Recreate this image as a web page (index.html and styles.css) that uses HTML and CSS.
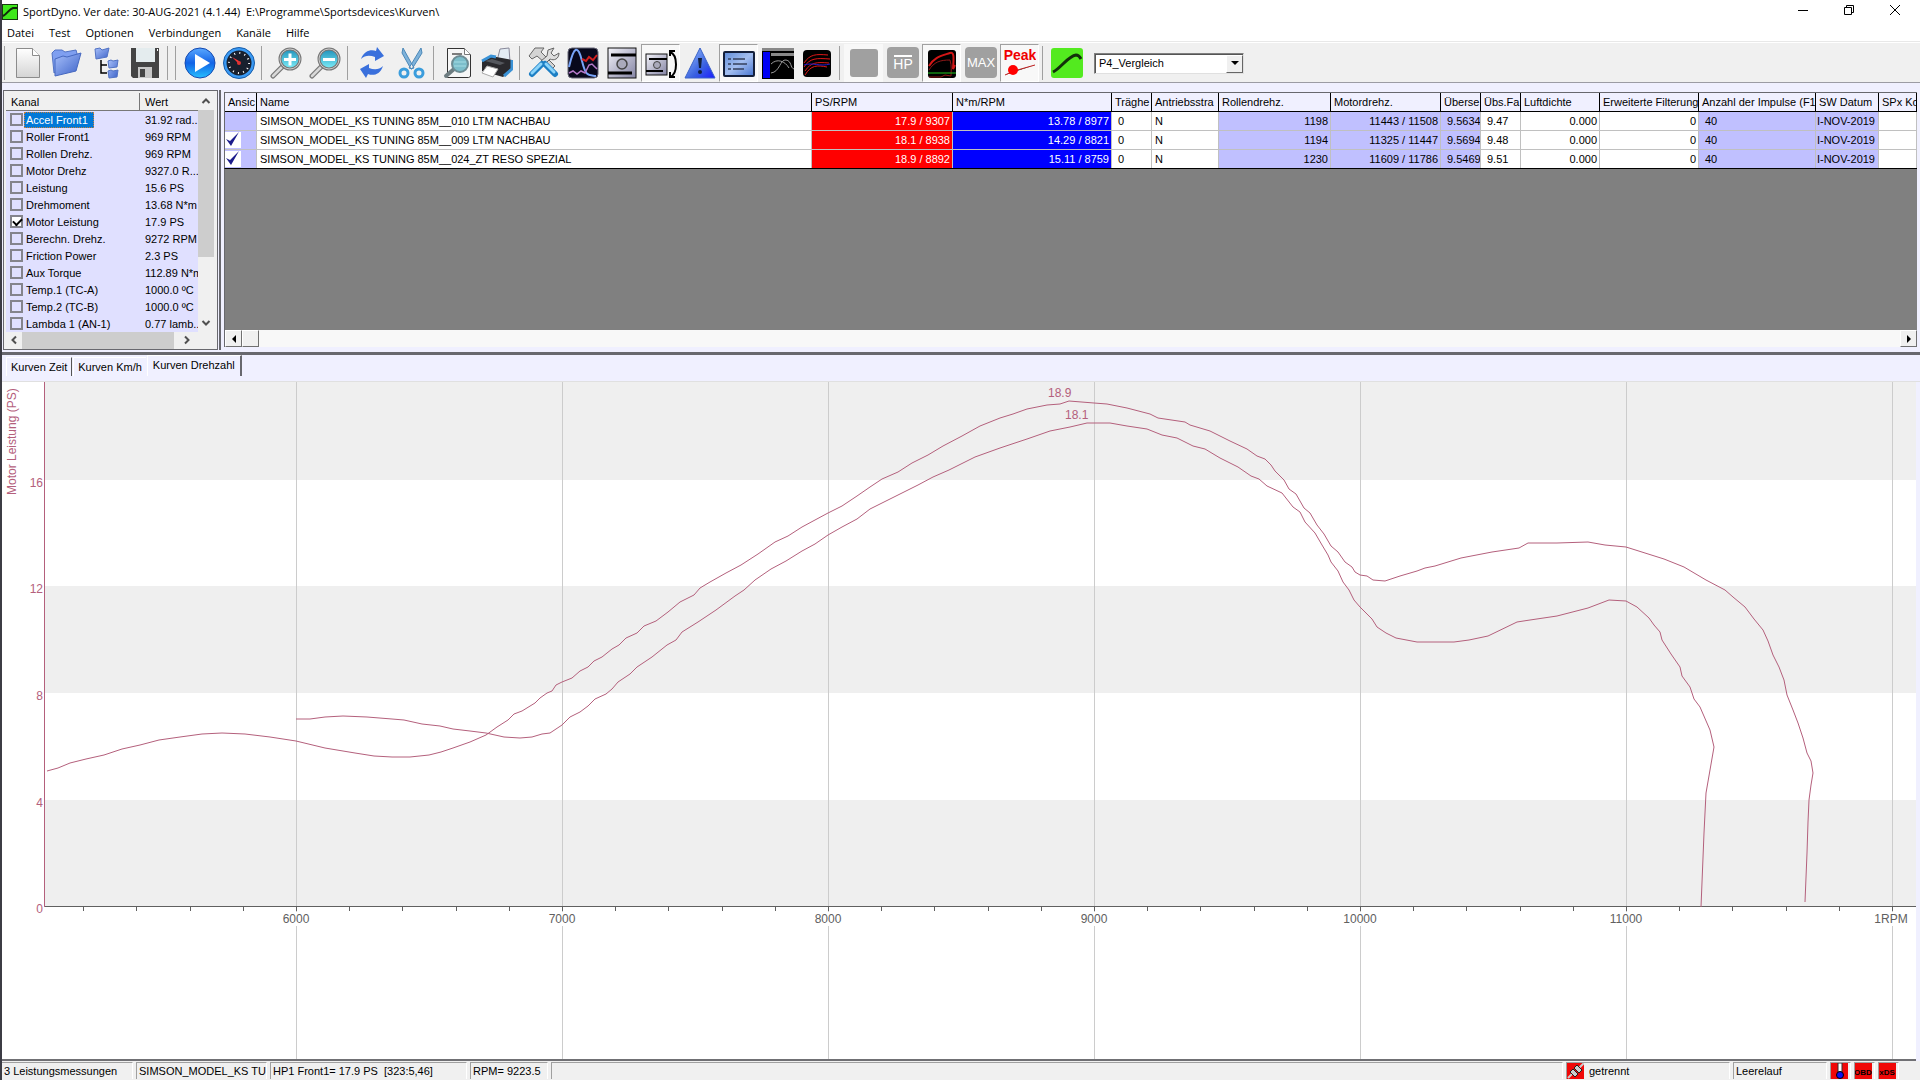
FILE: index.html
```html
<!DOCTYPE html>
<html lang="de">
<head>
  <meta charset="UTF-8">
  <meta name="viewport" content="width=device-width, initial-scale=1.0">
  <title>SportDyno</title>
  <link rel="stylesheet" href="styles.css">
</head>
<body>
  <header class="titlebar">
    <svg class="app-icon" viewBox="0 0 16 16"><rect x=".5" y=".5" width="15" height="15" fill="#3fe81c" stroke="#173b10"/><path d="M1 12C5 10 7 5 11 4h4" fill="none" stroke="#102a0a" stroke-width="2"/></svg>
    <h1>SportDyno. Ver date: 30-AUG-2021 (4.1.44)&nbsp; E:\Programme\Sportsdevices\Kurven\</h1>
    <div class="window-buttons">
      <button aria-label="Minimieren"><svg viewBox="0 0 12 12"><path d="M1 6.500h10" stroke="#000"/></svg></button>
      <button aria-label="Wiederherstellen"><svg viewBox="0 0 12 12"><path d="M1.500 3.500h7v7h-7zM3.500 3.500v-2h7v7h-2" fill="none" stroke="#000"/></svg></button>
      <button aria-label="Schließen"><svg viewBox="0 0 12 12"><path d="M1 1l10 10M11 1L1 11" stroke="#000"/></svg></button>
    </div>
  </header>

  <nav class="menu">
    <button>Datei</button>
    <button>Test</button>
    <button>Optionen</button>
    <button>Verbindungen</button>
    <button>Kanäle</button>
    <button>Hilfe</button>
  </nav>

  <!-- Farbverläufe für die Symbole -->
  <svg class="defs" aria-hidden="true">
    <defs>
      <linearGradient id="paper" x1="0" y1="0" x2="0" y2="1"><stop offset="0" stop-color="#fff"/><stop offset="1" stop-color="#d4d4d4"/></linearGradient>
      <linearGradient id="folder" x1="0" y1="0" x2="1" y2="1"><stop offset="0" stop-color="#a8c0fa"/><stop offset="1" stop-color="#3c62c8"/></linearGradient>
      <linearGradient id="blue" x1="0" y1="0" x2="0" y2="1"><stop offset="0" stop-color="#5aa8ff"/><stop offset=".5" stop-color="#1263e6"/><stop offset="1" stop-color="#25c0ff"/></linearGradient>
      <linearGradient id="metal" x1="0" y1="0" x2="1" y2="1"><stop offset="0" stop-color="#f4f4fa"/><stop offset="1" stop-color="#8484a4"/></linearGradient>
      <linearGradient id="screen" x1="0" y1="0" x2="1" y2="1"><stop offset="0" stop-color="#5f8cd8"/><stop offset=".5" stop-color="#a4bff0"/><stop offset="1" stop-color="#4674d0"/></linearGradient>
      <linearGradient id="lens" x1="0" y1="0" x2="0" y2="1"><stop offset="0" stop-color="#1f8fb8"/><stop offset="1" stop-color="#7ff0fa"/></linearGradient>
      <linearGradient id="warn" x1="0" y1="0" x2="1" y2="1"><stop offset="0" stop-color="#9ec6ff"/><stop offset=".6" stop-color="#3a62e0"/><stop offset="1" stop-color="#1b1bff"/></linearGradient>
    </defs>
  </svg>

  <div class="toolbar" role="toolbar">
    <span class="sep first"></span>
    <button aria-label="Neu"><svg viewBox="0 0 32 32"><path d="M4.500 1.500h16l7 7v22h-23z" fill="url(#paper)" stroke="#8c8c8c"/><path d="M20.500 1.500v7h7" fill="#fff" stroke="#8c8c8c"/></svg></button>
    <button aria-label="Öffnen"><svg viewBox="0 0 32 32"><path d="M3 26L1 6l3-3h7l3 2 11-2 2 7z" fill="#7f9ff0" stroke="#5273c4"/><path d="M4 12l8-3 4 1 14-4-5 18-21 5z" fill="url(#folder)" stroke="#4668c0"/></svg></button>
    <button aria-label="Baum"><svg viewBox="0 0 32 32"><path d="M11 13v13h6M11 18h6" fill="none" stroke="#000" stroke-width="1.500"/><path d="M5 2l5-1 2 2 7-2-2 9-11 2z" fill="url(#folder)" stroke="#5273c4"/><path d="M18 14l3-1 2 1 5-1-1 7-8 1zM18 24l3-1 2 1 5-1-1 7-8 1z" fill="url(#folder)" stroke="#5273c4"/></svg></button>
    <button aria-label="Speichern"><svg viewBox="0 0 32 32"><path d="M2 1h28v30H4l-2-2z" fill="#444"/><path d="M7 1h19v14H7z" fill="#e4ecee"/><path d="M28 2h1v2h-1z" fill="#fff"/><path d="M9 20h14v11H9z" fill="#c8c8c8"/><path d="M11 22h5v8h-5z" fill="#444"/></svg></button>
    <span class="sep"></span>
    <span class="sep"></span>
    <button aria-label="Start"><svg viewBox="0 0 32 32"><circle cx="16" cy="16" r="15" fill="url(#blue)" stroke="#1448b0"/><path d="M11 7l15 9-15 9z" fill="#fff"/></svg></button>
    <button aria-label="Messuhr"><svg viewBox="0 0 32 32"><circle cx="16" cy="16" r="14" fill="#18202e" stroke="#3a9af4" stroke-width="3"/><circle cx="16" cy="16" r="15.500" fill="none" stroke="#185ca8"/><circle cx="16" cy="16" r="10" fill="none" stroke="#fff" stroke-width="2" stroke-dasharray="1 4.240"/><path d="M9 10l7 4v3z" fill="#f33"/><circle cx="16" cy="16" r="2" fill="#d33"/></svg></button>
    <span class="sep"></span>
    <button aria-label="Vergrößern"><svg viewBox="0 0 32 32"><path d="M13 19L3 29" stroke="#777" stroke-width="5" stroke-linecap="round"/><path d="M13 19L3 29" stroke="#d8d8d8" stroke-width="2.500" stroke-linecap="round"/><circle cx="20" cy="12" r="10" fill="url(#lens)" stroke="#777" stroke-width="3"/><circle cx="20" cy="12" r="10" fill="none" stroke="#ccc"/><path d="M14 12.500h12M20 6.500v12" stroke="#fff" stroke-width="3"/></svg></button>
    <button aria-label="Verkleinern"><svg viewBox="0 0 32 32"><path d="M13 19L3 29" stroke="#777" stroke-width="5" stroke-linecap="round"/><path d="M13 19L3 29" stroke="#d8d8d8" stroke-width="2.500" stroke-linecap="round"/><circle cx="20" cy="12" r="10" fill="url(#lens)" stroke="#777" stroke-width="3"/><circle cx="20" cy="12" r="10" fill="none" stroke="#ccc"/><path d="M14 12.500h12" stroke="#fff" stroke-width="3"/></svg></button>
    <span class="sep"></span>
    <button aria-label="Aktualisieren"><svg viewBox="0 0 32 32"><path d="M5 12C8 3 16 2 20 4l1-4 7 9-9 5 0-4c-5-2-10-2-14 2zM27 19c-3 9-10 10-15 8l-2 4-6-9 9-5v4c5 2 10 2 14-2z" fill="#3a70dc"/></svg></button>
    <button aria-label="Ausschneiden"><svg viewBox="0 0 32 32"><path d="M8 1l11 20-3 1L7 6zM26 1L14 21l3 1L27 6z" fill="#7eb2da" stroke="#4c88b8"/><circle cx="9" cy="26" r="4" fill="none" stroke="#3b9ddc" stroke-width="3"/><circle cx="24" cy="26" r="4" fill="none" stroke="#3b9ddc" stroke-width="3"/></svg></button>
    <span class="sep"></span>
    <button aria-label="Seitenansicht"><svg viewBox="0 0 32 32"><path d="M5.500 1.500h17l6 6v22l-2 1h-21z" fill="#f6f6f6" stroke="#333"/><path d="M22.500 1.500v6h6" fill="#fff" stroke="#777"/><path d="M10 7h10" stroke="#555" stroke-width="1.500"/><path d="M12 22l-8 7" stroke="#6d7c80" stroke-width="4" stroke-linecap="round"/><circle cx="18" cy="17" r="8" fill="#7cbecb" stroke="#6d8c94" stroke-width="2"/><path d="M12 15h12M12 19h12" stroke="#a4dce4"/></svg></button>
    <button aria-label="Drucken"><svg viewBox="0 0 32 32"><path d="M16 14l3-12 9-1 1 14z" fill="#e4ecf4" stroke="#889"/><path d="M1 14l9-5 21 4v10l-9 7L1 24z" fill="#2a2a2e"/><path d="M1 14l9-5 5 1M31 13v9l-8 7" fill="none" stroke="#3a92d6" stroke-width="3"/><path d="M4 14l7-2 13 4-5 2z" fill="#55585e"/><path d="M6 19l11 3-5 8-11-4z" fill="#fff" stroke="#aaa"/></svg></button>
    <span class="sep"></span>
    <button aria-label="Werkzeuge"><svg viewBox="0 0 32 32"><path d="M1 9l6-8h9l-3 4 14 14-3 3L9 9l-5 3z" fill="#d4d4d4" stroke="#666"/><path d="M20 3l6-2-3 5 3 3 5-3c0 6-5 8-9 6l-5 5-4-3 6-5z" fill="#ddd" stroke="#666"/><path d="M4 27l10-10M17 17l10 10" stroke="#1d7fc4" stroke-width="6" stroke-linecap="round"/><path d="M4 26l9-9M18 17l8 8" stroke="#8cd4fa" stroke-width="3" stroke-linecap="round"/></svg></button>
    <button aria-label="Diagramm"><svg viewBox="0 0 32 32"><rect x="1" y="1" width="30" height="30" rx="4" fill="#08081c" stroke="#667"/><path d="M2 20c5-22 9-22 13-6s6 14 14 15" fill="none" stroke="#78a4f8" stroke-width="2"/><path d="M15 12l4 2 3-4 4 3 4-5" fill="none" stroke="#d02020" stroke-width="2"/><path d="M2 26l4-2 4 3 4-3 4 2 4-8 3-1 5 5" fill="none" stroke="#b478c8" stroke-width="1.500"/></svg></button>
    <button aria-label="Rolle"><svg viewBox="0 0 32 32"><rect x="2" y="1" width="28" height="30" fill="url(#metal)" stroke="#111"/><path d="M5 8h25M2 26h24" stroke="#000" stroke-width="3"/><circle cx="16" cy="17" r="5" fill="#aab" stroke="#444" stroke-width="1.500"/></svg></button>
    <button class="pressed" aria-label="Rolle bremsen"><svg viewBox="0 0 32 32"><rect x="1" y="7" width="21" height="21" fill="url(#metal)" stroke="#111"/><path d="M4 12h18M1 24h17" stroke="#000" stroke-width="2"/><circle cx="12" cy="18" r="3.500" fill="#aab" stroke="#444"/><path d="M25 5c8 3 8 22 0 25M25 9V4h5M25 25v5h5" fill="none" stroke="#000" stroke-width="2"/></svg></button>
    <button aria-label="Warnung"><svg viewBox="0 0 32 32"><path d="M16 1l15 30H1z" fill="url(#warn)" stroke="#3a62c8"/><path d="M14 11h4l-1 10h-2z" fill="#102040"/><circle cx="16" cy="25" r="2" fill="#102040"/></svg></button>
    <button class="pressed" aria-label="Anzeige"><svg viewBox="0 0 32 32"><rect x="1" y="5" width="30" height="24" rx="1" fill="url(#screen)" stroke="#14203c" stroke-width="2"/><path d="M5 12h3M10 12h12M5 17h3M10 17h14M5 22h3M10 22h11" stroke="#34405c" stroke-width="1.500"/></svg></button>
    <button aria-label="Ansicht"><svg viewBox="0 0 32 32"><path d="M0 1h32v31H0z" fill="#000"/><path d="M0 1h32v3H0zM9 6h23v3H9z" fill="#888"/><path d="M1 5h7v26H1z" fill="#0000f4"/><path d="M9 26c9-1 9-14 15-13s4 8 8 9M9 17c6-6 14-3 18 4" fill="none" stroke="#999"/></svg></button>
    <button aria-label="Kurven"><svg viewBox="0 0 32 32"><rect x="2" y="3" width="28" height="27" rx="4" fill="#000"/><path d="M3 16c6-9 12-9 24-8M3 20c6-9 12-9 26-8M4 24c6-9 12-9 24-8M4 28c6-10 12-10 22-8" fill="none" stroke="#e01818"/><path d="M3 18c9-3 16 2 26-1" fill="none" stroke="#2020d0"/></svg></button>
    <span class="sep"></span>
    <button class="dither" aria-label="Leer"><svg viewBox="0 0 32 32"><rect x="2" y="2" width="28" height="28" rx="3" fill="#a0a0a0"/></svg></button>
    <button aria-label="HP"><svg viewBox="0 0 32 32"><rect width="32" height="31" rx="4" fill="#a0a0a0"/><path d="M7 9h18" stroke="#fff" stroke-width="2"/><text x="16" y="22" class="icon-text">HP</text></svg></button>
    <button class="pressed" aria-label="Vergleich"><svg viewBox="0 0 32 32"><rect x="2" y="3" width="28" height="28" rx="3" fill="#000"/><path d="M3 19C8 10 15 9 24 6c4-1 4 3 3 16l2-4" fill="none" stroke="#d41616" stroke-width="2"/><path d="M3 23c5-8 11-10 21-10 2 6 1 12 1 16l-6-1-4 2-12 0" fill="none" stroke="#901818"/><path d="M2 26h28" stroke="#20c820"/></svg></button>
    <button aria-label="MAX"><svg viewBox="0 0 32 32"><rect width="32" height="31" rx="4" fill="#a0a0a0"/><text x="16" y="20" class="icon-text max">MAX</text></svg></button>
    <button class="pressed" aria-label="Peak"><svg viewBox="0 0 32 32"><text x="16" y="13" class="icon-text peak">Peak</text><path d="M1 28l9-4 21-6" stroke="#c02020"/><circle cx="9" cy="23" r="5" fill="#f00"/></svg></button>
    <span class="sep"></span>
    <button aria-label="SportDyno"><svg viewBox="0 0 32 32"><rect x="0" y="1" width="32" height="30" rx="3" fill="#53ea1f"/><path d="M2 25C10 21 17 9 25 8q3 0 5 4" fill="none" stroke="#12300a" stroke-width="3"/></svg></button>
    <label class="combo">
      <select aria-label="Vorlage"><option>P4_Vergleich</option></select>
      <span class="combo-arrow"><svg viewBox="0 0 8 5"><path d="M0 0h8L4 4z"/></svg></span>
    </label>
  </div>

  <section class="upper">
    <div class="channels">
      <div class="channel-view">
        <table class="channel-table">
          <thead><tr><th>Kanal</th><th>Wert</th></tr></thead>
          <tbody>
            <tr><td><label class="selected"><input type="checkbox"><span>Accel Front1</span></label></td><td>31.92 rad..</td></tr>
            <tr><td><label><input type="checkbox"><span>Roller Front1</span></label></td><td>969 RPM</td></tr>
            <tr><td><label><input type="checkbox"><span>Rollen Drehz.</span></label></td><td>969 RPM</td></tr>
            <tr><td><label><input type="checkbox"><span>Motor Drehz</span></label></td><td>9327.0 R...</td></tr>
            <tr><td><label><input type="checkbox"><span>Leistung</span></label></td><td>15.6 PS</td></tr>
            <tr><td><label><input type="checkbox"><span>Drehmoment</span></label></td><td>13.68 N*m</td></tr>
            <tr><td><label><input type="checkbox" checked><span>Motor Leistung</span></label></td><td>17.9 PS</td></tr>
            <tr><td><label><input type="checkbox"><span>Berechn. Drehz.</span></label></td><td>9272 RPM</td></tr>
            <tr><td><label><input type="checkbox"><span>Friction Power</span></label></td><td>2.3 PS</td></tr>
            <tr><td><label><input type="checkbox"><span>Aux Torque</span></label></td><td>112.89 N*m</td></tr>
            <tr><td><label><input type="checkbox"><span>Temp.1 (TC-A)</span></label></td><td>1000.0 ºC</td></tr>
            <tr><td><label><input type="checkbox"><span>Temp.2 (TC-B)</span></label></td><td>1000.0 ºC</td></tr>
            <tr><td><label><input type="checkbox"><span>Lambda 1 (AN-1)</span></label></td><td>0.77 lamb..</td></tr>
          </tbody>
        </table>
      </div>
      <div class="vscroll">
        <button aria-label="Nach oben"><svg viewBox="0 0 10 10"><path d="M1.500 7L5 3.500 8.500 7"/></svg></button>
        <span class="thumb"></span>
        <button aria-label="Nach unten"><svg viewBox="0 0 10 10"><path d="M1.500 3L5 6.500 8.500 3"/></svg></button>
      </div>
      <div class="hscroll">
        <button aria-label="Nach links"><svg viewBox="0 0 10 10"><path d="M7 1.500L3.500 5 7 8.500"/></svg></button>
        <span class="thumb"></span>
        <button aria-label="Nach rechts"><svg viewBox="0 0 10 10"><path d="M3 1.500L6.500 5 3 8.500"/></svg></button>
      </div>
    </div>

    <div class="runs">
      <table class="run-table">
        <colgroup>
          <col class="w32"><col><col class="w141"><col class="w159"><col class="w40"><col class="w67"><col class="w112"><col class="w110"><col class="w40"><col class="w40"><col class="w79"><col class="w99"><col class="w117"><col class="w63"><col class="w38">
        </colgroup>
        <thead>
          <tr><th>Ansic</th><th>Name</th><th>PS/RPM</th><th>N*m/RPM</th><th>Träghe</th><th>Antriebsstra</th><th>Rollendrehz.</th><th>Motordrehz.</th><th>Überse</th><th>Übs.Fa</th><th>Luftdichte</th><th>Erweiterte Filterung</th><th>Anzahl der Impulse (F1</th><th>SW Datum</th><th>SPx Ko</th></tr>
        </thead>
        <tbody>
          <tr><td class="lilac view"></td><td>SIMSON_MODEL_KS TUNING 85M__010 LTM NACHBAU</td><td class="red num">17.9 / 9307</td><td class="blue num">13.78 / 8977</td><td class="pad">0</td><td>N</td><td class="lilac num">1198</td><td class="lilac num">11443 / 11508</td><td class="lilac pad">9.5634</td><td class="pad">9.47</td><td class="num">0.000</td><td class="num">0</td><td class="lilac pad">40</td><td class="lilac date"><span>I-NOV-2019</span></td><td></td></tr>
          <tr><td class="lilac view"><svg viewBox="0 0 16 16"><path d="M0 0h16v16H0z" fill="#fff"/><path d="M1 7l4 2L14 0 6 14z" fill="#1c1c8c"/></svg></td><td>SIMSON_MODEL_KS TUNING 85M__009 LTM NACHBAU</td><td class="red num">18.1 / 8938</td><td class="blue num">14.29 / 8821</td><td class="pad">0</td><td>N</td><td class="lilac num">1194</td><td class="lilac num">11325 / 11447</td><td class="lilac pad">9.5694</td><td class="pad">9.48</td><td class="num">0.000</td><td class="num">0</td><td class="lilac pad">40</td><td class="lilac date"><span>I-NOV-2019</span></td><td></td></tr>
          <tr><td class="lilac view"><svg viewBox="0 0 16 16"><path d="M0 0h16v16H0z" fill="#fff"/><path d="M1 7l4 2L14 0 6 14z" fill="#1c1c8c"/></svg></td><td>SIMSON_MODEL_KS TUNING 85M__024_ZT RESO SPEZIAL</td><td class="red num">18.9 / 8892</td><td class="blue num">15.11 / 8759</td><td class="pad">0</td><td>N</td><td class="lilac num">1230</td><td class="lilac num">11609 / 11786</td><td class="lilac pad">9.5469</td><td class="pad">9.51</td><td class="num">0.000</td><td class="num">0</td><td class="lilac pad">40</td><td class="lilac date"><span>I-NOV-2019</span></td><td></td></tr>
        </tbody>
      </table>
      <div class="classic-scroll">
        <button aria-label="Nach links"><svg viewBox="0 0 8 8"><path d="M6 0v8L2 4z"/></svg></button>
        <button aria-label="Schieber"></button>
        <span class="track"></span>
        <button aria-label="Nach rechts"><svg viewBox="0 0 8 8"><path d="M2 0v8l4-4z"/></svg></button>
      </div>
    </div>
  </section>

  <div class="tabs" role="tablist">
    <button role="tab">Kurven Zeit</button>
    <button role="tab">Kurven Km/h</button>
    <button role="tab" class="active" aria-selected="true">Kurven Drehzahl</button>
  </div>

  <main class="chart">
    <svg viewBox="2 382 1914 677" preserveAspectRatio="xMinYMin meet">
      <g fill="#efefef" shape-rendering="crispEdges">
        <rect x="45" y="382" width="1871" height="98"/>
        <rect x="45" y="586" width="1871" height="107"/>
        <rect x="45" y="800" width="1871" height="107"/>
      </g>
      <path class="grid" d="M296.500 382V1059M562.500 382V1059M828.500 382V1059M1094.500 382V1059M1360.500 382V1059M1626.500 382V1059M1892.500 382V1059"/>
      <g fill="#fff">
        <rect x="278" y="912" width="36" height="14"/><rect x="544" y="912" width="36" height="14"/><rect x="810" y="912" width="36" height="14"/><rect x="1076" y="912" width="36" height="14"/><rect x="1340" y="912" width="40" height="14"/><rect x="1606" y="912" width="40" height="14"/><rect x="1872" y="912" width="38" height="14"/>
      </g>
      <path class="axis" d="M44 906.500H1916M83.500 907v4M136.500 907v4M190.500 907v4M243.500 907v4M296.500 907v4M349.500 907v4M402.500 907v4M456.500 907v4M509.500 907v4M562.500 907v4M615.500 907v4M668.500 907v4M722.500 907v4M775.500 907v4M828.500 907v4M881.500 907v4M934.500 907v4M988.500 907v4M1041.500 907v4M1094.500 907v4M1147.500 907v4M1200.500 907v4M1254.500 907v4M1307.500 907v4M1360.500 907v4M1413.500 907v4M1466.500 907v4M1520.500 907v4M1573.500 907v4M1626.500 907v4M1679.500 907v4M1732.500 907v4M1786.500 907v4M1839.500 907v4M1892.500 907v4"/>
      <path class="curve" d="M44.500 382V907"/>

      <polyline class="curve" points="47,771 58,768 70,763 86,759 104,755 122,749 140,745 159,740 180,737 202,734 222,733 245,734 270,737 296,741 325,748 355,753 374,756 392,757 410,757 429,755 441,752 453,748 470,742 486,735 497,727 508,720 514,714 522,711 535,703 540,698 547,693 552,691 556,685 562,682 572,678 580,671 588,667 594,661 602,657 612,649 619,645 626,638 637,633 644,626 656,621 668,612 680,602 694,595 700,588 710,582 726,573 741,565 758,554 775,542 788,536 802,527 815,520 828,513 842,506 857,496 870,487 882,479 898,472 912,463 928,455 943,446 962,436 980,426 1000,418 1013,414 1027,409 1047,405 1060,404 1069,401 1094,403 1107,404 1127,408 1150,414 1158,418 1185,422 1190,425 1210,431 1230,441 1247,449 1257,456 1265,459 1271,465 1275,471 1284,480 1289,489 1296,494 1304,508 1310,513 1317,525 1324,534 1331,546 1338,552 1345,562 1352,567 1355,572 1360,575 1367,576 1373,580 1385,581 1400,576 1417,571 1425,568 1435,566 1461,558 1492,552 1519,548 1528,543 1557,543 1588,542 1605,545 1626,547 1645,553 1664,559 1684,567 1706,580 1725,590 1733,597 1745,607 1754,619 1763,630 1768,641 1773,655 1779,667 1784,680 1787,695 1793,710 1798,723 1803,738 1807,753 1811,761 1813,773 1811,785 1809,800 1808,822 1807,853 1805,902"/>
      <polyline class="curve" points="296,719 310,719 325,717 343,716 367,717 392,719 404,720 422,724 440,726 453,729 470,731 486,733 504,737 520,738 532,737 542,734 550,733 562,725 570,717 580,712 588,706 595,699 606,694 612,689 618,682 630,674 637,667 652,657 667,645 676,640 682,632 698,622 716,610 735,596 744,590 755,580 771,569 786,561 802,551 815,544 828,535 842,527 857,519 870,509 882,503 900,494 918,485 933,477 949,470 975,457 1000,448 1027,439 1050,431 1070,427 1087,423 1110,423 1127,426 1147,429 1162,435 1177,438 1193,446 1205,449 1220,458 1238,467 1251,476 1259,479 1267,486 1282,493 1293,507 1300,512 1305,522 1315,533 1322,545 1328,555 1331,562 1338,571 1343,582 1349,590 1354,600 1360,607 1372,619 1377,627 1386,633 1396,638 1417,642 1454,642 1469,640 1488,636 1517,622 1530,620 1557,616 1588,608 1609,600 1626,601 1637,607 1649,618 1654,625 1660,632 1662,640 1671,654 1680,667 1682,676 1690,687 1694,699 1700,707 1710,730 1714,747 1710,770 1706,793 1704,833 1701,907"/>

      <g class="curve-text">
        <text x="1048" y="397">18.9</text>
        <text x="1065" y="419">18.1</text>
        <text transform="translate(16 495) rotate(-90)">Motor Leistung (PS)</text>
        <g text-anchor="end">
          <text x="43" y="487">16</text>
          <text x="43" y="593">12</text>
          <text x="43" y="700">8</text>
          <text x="43" y="807">4</text>
          <text x="43" y="913">0</text>
        </g>
      </g>
      <g class="axis-text">
        <text x="296" y="923">6000</text>
        <text x="562" y="923">7000</text>
        <text x="828" y="923">8000</text>
        <text x="1094" y="923">9000</text>
        <text x="1360" y="923">10000</text>
        <text x="1626" y="923">11000</text>
        <text x="1891" y="923">1RPM</text>
      </g>
    </svg>
  </main>

  <footer class="status">
    <span class="cell w131">3 Leistungsmessungen</span>
    <span class="cell w131 bordered">SIMSON_MODEL_KS TUNI</span>
    <span class="cell w197 bordered">HP1 Front1= 17.9 PS&nbsp; [323:5,46]</span>
    <span class="cell w78 bordered">RPM= 9223.5</span>
    <span class="cell fill bordered"></span>
    <span class="cell w164 bordered icon-cell"><svg viewBox="0 0 17 16"><path d="M0 0h17v16H0z" fill="#f00808"/><path d="M1 15l4-4M12 5l5-5" stroke="#ccc" stroke-width="2"/><path d="M3 9l5 5 3-3-5-5zM7 5l5 5 3-3-5-5z" fill="#ccc" stroke="#222"/></svg>getrennt</span>
    <span class="cell w94 bordered">Leerelauf</span>
    <span class="cell w21 bordered icon-cell"><svg viewBox="0 0 17 16"><path d="M0 0h17v16H0z" fill="#f00808"/><path d="M7 0h4v9H7z" fill="#fff" stroke="#333"/><circle cx="9" cy="12" r="3.500" fill="#1010f0" stroke="#000"/></svg></span>
    <span class="cell w21 bordered icon-cell"><svg viewBox="0 0 17 16"><path d="M0 0h17v16H0z" fill="#f00808"/><text x="8" y="12" class="chip">OBD</text></svg></span>
    <span class="cell w21 bordered icon-cell"><svg viewBox="0 0 17 16"><path d="M0 0h17v16H0z" fill="#f00808"/><text x="8" y="12" class="chip">xDS</text></svg></span>
  </footer>
</body>
</html>
```

FILE: styles.css
```css
* {
  box-sizing: border-box;
}

body {
  margin: 0;
  height: 100vh;
  display: flex;
  flex-direction: column;
  overflow: hidden;
  background: #f0f0ff;
  border-left: 2px solid #3c3c44;
  font-family: "Liberation Sans", Arial, sans-serif;
  font-size: 11px;
  color: #000;
}

button,
select {
  font: inherit;
  color: inherit;
  border: 0;
  padding: 0;
  background: none;
}

.defs {
  position: absolute;
  width: 0;
  height: 0;
}

/* Titelzeile und Menü */
.titlebar,
.menu {
  flex: none;
  display: flex;
  align-items: center;
  background: #fff;
  font-family: "Open Sans", "Noto Sans", sans-serif;
}

.titlebar {
  height: 23px;
}

.app-icon {
  width: 16px;
  height: 16px;
}

.titlebar h1 {
  flex: 1;
  margin: 0 0 0 5px;
  font-size: 11px;
  font-weight: normal;
}

.window-buttons {
  display: flex;
  margin-right: 2px;
}

.window-buttons button {
  width: 46px;
  height: 20px;
}

.window-buttons svg {
  width: 12px;
  height: 12px;
}

.menu {
  height: 18px;
  padding-left: 5px;
  gap: 15px;
}

/* Werkzeugleiste */
.toolbar {
  flex: none;
  display: flex;
  align-items: center;
  height: 42px;
  padding-top: 2px;
  background: #f0f0f0;
  border-top: 1px solid #e8e8e8;
  border-bottom: 1px solid #9c9ca4;
  box-shadow: inset 0 1px #fff;
}

.toolbar button {
  flex: none;
  width: 39px;
  height: 38px;
  border: 1px solid transparent;
  display: flex;
  align-items: center;
  justify-content: center;
}

.toolbar button svg {
  width: 32px;
  height: 32px;
}

.toolbar .pressed {
  border-color: #a0a0a0 #fff #fff #a0a0a0;
  background: #f8f8f8;
}

.toolbar .dither {
  background: #f8f8f8;
}

.sep {
  flex: none;
  width: 8px;
  height: 34px;
  background: linear-gradient(#a0a0a0, #a0a0a0) 3px 0 / 1px 100% no-repeat;
}

.sep.first {
  width: 6px;
  background-position: 2px 0;
}

.icon-text {
  font: 14px "Liberation Sans", sans-serif;
  fill: #fff;
  text-anchor: middle;
}

.icon-text.max {
  font-size: 13px;
}

.icon-text.peak {
  font-weight: bold;
  fill: #f00000;
}

.combo {
  display: flex;
  width: 150px;
  height: 21px;
  margin-left: 8px;
  background: #fff;
  border: 1px solid;
  border-color: #808080 #e0e0e0 #e0e0e0 #808080;
  box-shadow: inset 1px 1px #555;
}

.combo select {
  flex: 1;
  min-width: 0;
  appearance: none;
  padding-left: 4px;
}

.combo-arrow {
  display: flex;
  align-items: center;
  justify-content: center;
  width: 17px;
  margin: 1px 0 0;
  background: #f0f0f0;
  border: 1px solid;
  border-color: #fff #666 #666 #fff;
  pointer-events: none;
}

.combo-arrow svg {
  width: 8px;
  height: 5px;
}

/* Oberer Bereich */
.upper {
  flex: none;
  display: flex;
  height: 272px;
  padding: 7px 3px 2px 1px;
  border-bottom: 3px solid #68686e;
}

.channels {
  flex: none;
  display: grid;
  grid-template-columns: 192px 16px;
  grid-template-rows: 1fr 17px;
  width: 215px;
  padding: 2px;
  border: 1px solid #68686e;
  background: #f0f0f0;
}

.channel-view {
  overflow: hidden;
  height: 239px;
  background: #e0e0ff;
}

.channel-table,
.run-table {
  width: 100%;
  table-layout: fixed;
  border-spacing: 0;
}

.channel-table th {
  height: 18px;
  padding: 0 5px;
  text-align: left;
  font-weight: normal;
  background: #f0f0f0;
  border-right: 1px solid #777;
  border-bottom: 1px solid #777;
}

.channel-table th:last-child {
  width: 58px;
  border-right: 0;
}

.channel-table td {
  height: 17px;
  padding: 0 0 0 4px;
  overflow: hidden;
  white-space: nowrap;
}

.channel-table td:last-child {
  padding-left: 5px;
}

.channel-table label {
  display: flex;
  align-items: center;
  gap: 1px;
}

.channel-table label span {
  padding: 0 2px;
  line-height: 16px;
}

.channel-table .selected span {
  padding-right: 6px;
  color: #fff;
  background: #0078d7;
  outline: 1px dotted #c88038;
  outline-offset: -1px;
}

.channel-table input {
  appearance: none;
  width: 13px;
  height: 13px;
  margin: 0;
  border: 2px solid #84848c;
}

.channel-table input:checked {
  background: #fff;
}

.channel-table input:checked::before {
  content: "";
  display: block;
  width: 7px;
  height: 4px;
  margin: 1px;
  border-left: 2px solid #000;
  border-bottom: 2px solid #000;
  rotate: -45deg;
}

.vscroll,
.hscroll {
  display: flex;
}

.vscroll {
  flex-direction: column;
  justify-content: space-between;
}

.vscroll button,
.hscroll button {
  width: 16px;
  height: 17px;
}

.vscroll svg,
.hscroll svg {
  width: 10px;
  height: 10px;
  fill: none;
  stroke: #505050;
  stroke-width: 2;
}

.thumb {
  background: #cdcdcd;
}

.vscroll .thumb {
  height: 147px;
  margin-bottom: auto;
}

.hscroll .thumb {
  width: 152px;
  margin-right: 5px;
}

.runs {
  flex: 1;
  min-width: 0;
  display: flex;
  flex-direction: column;
  margin-left: 1px;
  padding: 2px 0 3px 3px;
  border-left: 2px solid #68686e;
  background: #f0f0ff;
}

.run-table {
  flex: none;
  border-top: 1px solid #68686e;
  border-left: 1px solid #68686e;
  border-bottom: 1px solid #000;
}

.run-table th,
.run-table td {
  overflow: hidden;
  padding: 0 3px;
  white-space: nowrap;
  text-align: left;
  font-weight: normal;
}

.run-table th {
  height: 19px;
  border-right: 1px solid #000;
  border-bottom: 1px solid #000;
}

.run-table td {
  height: 19px;
  background: #fff;
  border-right: 1px solid #c0c0c0;
  border-bottom: 1px solid #c0c0c0;
}

.run-table tbody tr:last-child td {
  height: 18px;
  border-bottom: 0;
}

.run-table .lilac {
  background: #c0c0ff;
}

.run-table .red {
  color: #fff;
  background: #f00;
}

.run-table .blue {
  color: #fff;
  background: #00f;
}

.run-table .num {
  text-align: right;
  padding: 0 2px;
}

.run-table .pad {
  padding-left: 6px;
}

.run-table .view {
  padding: 0;
}

.view svg {
  display: block;
  width: 16px;
  height: 16px;
}

.date span {
  float: right;
}

.w32 { width: 32px; }
.w38 { width: 38px; }
.w40 { width: 40px; }
.w63 { width: 63px; }
.w67 { width: 67px; }
.w79 { width: 79px; }
.w99 { width: 99px; }
.w110 { width: 110px; }
.w112 { width: 112px; }
.w117 { width: 117px; }
.w141 { width: 141px; }
.w159 { width: 159px; }

.classic-scroll {
  display: flex;
  flex: 1;
  align-items: flex-end;
  background: #808080;
  border-left: 1px solid #68686e;
}

.classic-scroll button,
.classic-scroll .track {
  height: 17px;
}

.classic-scroll button {
  width: 17px;
  background: #f0f0f0;
  border: 1px solid;
  border-color: #fff #707070 #707070 #fff;
}

.classic-scroll svg {
  width: 8px;
  height: 8px;
}

.classic-scroll .track {
  flex: 1;
  background: #f8f8f8;
}

/* Reiter */
.tabs {
  flex: none;
  display: flex;
  align-items: flex-end;
  height: 27px;
  padding: 0 0 5px 4px;
  border-bottom: 1px solid #e0e0e0;
}

.tabs button {
  height: 19px;
  padding: 0 4px;
  margin-right: 1px;
  border-top: 1px solid #fff;
  border-left: 1px solid #fff;
  border-right: 1px solid #555;
}

.tabs button:nth-child(2) {
  border-right: 0;
}

.tabs .active {
  height: 21px;
  padding: 0 5px 2px;
  border-right: 2px solid #68686e;
}

/* Diagramm */
.chart {
  flex: 1;
  min-height: 0;
  margin-right: 4px;
  background: #fff;
  border-bottom: 2px solid #707074;
}

.chart svg {
  display: block;
  width: 100%;
  height: 100%;
}

.grid {
  fill: none;
  stroke: #ccc;
}

.axis {
  fill: none;
  stroke: #606060;
}

.curve {
  fill: none;
  stroke: #b4607c;
}

.curve-text {
  font-size: 12px;
  fill: #b4607c;
}

.axis-text {
  font-size: 12px;
  fill: #606060;
  text-anchor: middle;
}

/* Statuszeile */
.status {
  flex: none;
  display: flex;
  gap: 3px;
  height: 19px;
  padding: 1px 21px 1px 0;
  background: #f0f0f0;
}

.cell {
  flex: none;
  overflow: hidden;
  padding-left: 2px;
  line-height: 16px;
  white-space: nowrap;
  border-top: 1px solid #a0a0a0;
  border-right: 1px solid #fff;
}

.bordered {
  padding-left: 2px;
  border-left: 1px solid #a0a0a0;
}

.w21 { width: 21px; }
.w78 { width: 78px; }
.w94 { width: 94px; }
.w131 { width: 131px; }
.w164 { width: 164px; }
.w197 { width: 197px; }

.fill {
  flex: 1;
}

.icon-cell {
  display: flex;
  gap: 5px;
  padding-left: 0;
}

.icon-cell svg {
  width: 17px;
  height: 16px;
}

.chip {
  font: bold 8px "Liberation Sans", sans-serif;
  text-anchor: middle;
}
```
